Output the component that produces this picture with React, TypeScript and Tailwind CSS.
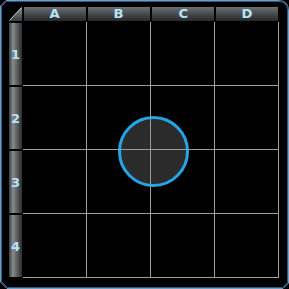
import React from "react";

const cols = ["A", "B", "C", "D"];
const rows = ["1", "2", "3", "4"];

export default function App() {
  return (
    <div
      className="relative w-[289px] h-[289px] bg-black overflow-hidden pl-[9px] pt-[7px]"
      style={{ fontFamily: '"DejaVu Sans", "Liberation Sans", sans-serif' }}
    >
      <svg className="absolute inset-0 pointer-events-none" width="289" height="289">
        <path
          d="M0.5,6 L6,0.5 L278,0.5 Q288.5,0.5 288.5,11 L288.5,283 L283,288.5 L7,288.5 L0.5,282 Z"
          fill="none"
          stroke="#6d9ec4"
          strokeWidth="1"
        />
        <path
          d="M1.5,6.5 L6.5,1.5 L278,1.5 Q287.5,1.5 287.5,11 L287.5,282.5 L282.5,287.5 L7.5,287.5 L1.5,281.5 Z"
          fill="none"
          stroke="#2c5a80"
          strokeWidth="1"
        />
      </svg>

      <div className="relative grid grid-cols-[14px_repeat(4,64px)] grid-rows-[15px_repeat(4,64px)]">
        {/* corner */}
        <div className="pb-px pr-px">
          <svg width="13" height="14" className="block">
            <defs>
              <linearGradient id="cg" x1="0" y1="0" x2="0" y2="1">
                <stop offset="0" stopColor="#8a8e91" />
                <stop offset="1" stopColor="#3a3d40" />
              </linearGradient>
            </defs>
            <polygon points="0,14 13,14 13,0" fill="url(#cg)" />
            <line x1="0.5" y1="13.5" x2="12.5" y2="0.5" stroke="#d0d4d6" strokeWidth="1" />
          </svg>
        </div>
        {cols.map((c) => (
          <div key={c} className="mx-px mb-px">
            <div className="h-[14px] flex items-center justify-center bg-linear-to-b from-[#6c7174] via-[#474b4e] to-[#26292b] text-[12px] font-bold leading-none text-[#b4e4fa]">
              <span className="inline-block scale-x-110">{c}</span>
            </div>
          </div>
        ))}

        {rows.map((r) => (
          <React.Fragment key={r}>
            <div className="my-px mr-px flex items-center justify-center bg-linear-to-r from-[#3a3e41] via-[#888c8f] via-30% to-[#2c2f31] text-[13px] font-bold leading-none text-[#b4e4fa]">
              {r}
            </div>
            {cols.map((c) => (
              <div key={c} className="relative z-10 border-r border-b border-[#9c9c9c]" />
            ))}
          </React.Fragment>
        ))}

        {/* circle token */}
        <svg
          className="absolute left-[108px] top-[108px] z-0"
          width="74"
          height="74"
        >
          <circle cx="36.5" cy="36.5" r="34" fill="#2b2b2b" stroke="#22a6e6" strokeWidth="3" />
        </svg>
      </div>
    </div>
  );
}
